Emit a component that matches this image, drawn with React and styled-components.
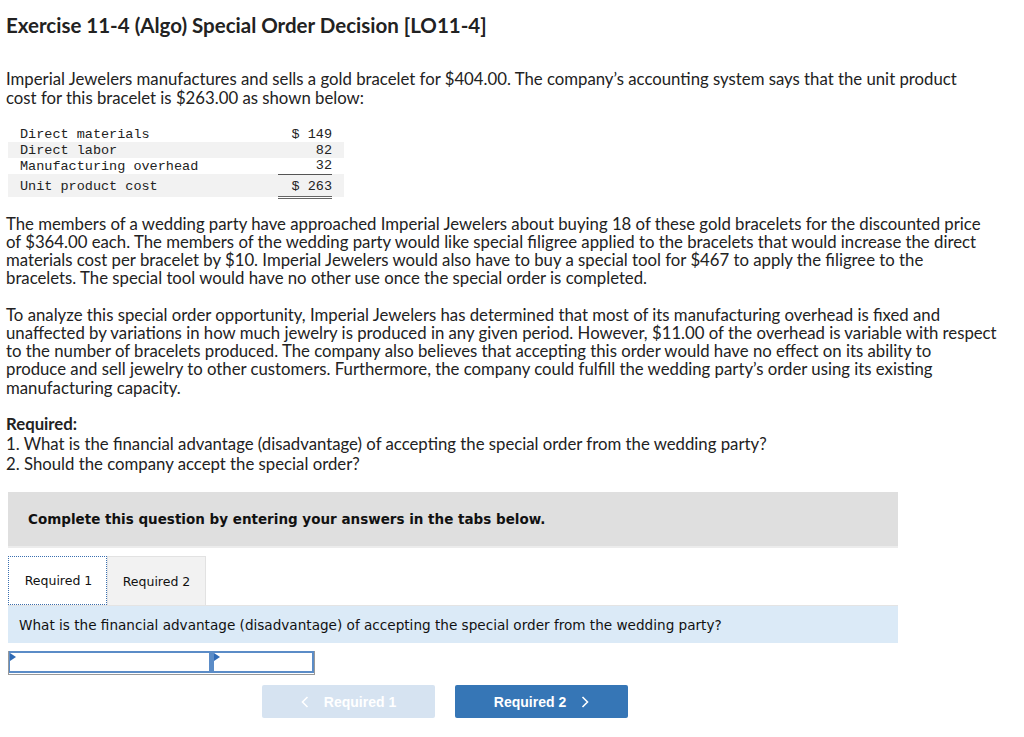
import React from 'react';
import styled, { createGlobalStyle } from 'styled-components';

const GlobalStyle = createGlobalStyle`
  body {
    margin: 0;
    background: #fff;
    font-family: Lato, "Open Sans", sans-serif;
    color: #222;
  }
`;

const Page = styled.div`
  width: 1024px;
  padding: 12px 0 0 6px;
  box-sizing: border-box;
`;

const Title = styled.h1`
  margin: 0 0 31px;
  font-size: 20.5px;
  font-weight: 700;
  color: #222;
  line-height: 26px;
`;

const Para = styled.p`
  margin: 0 0 ${({ $gap }) => $gap ?? 19}px;
  font-size: 16.75px;
  line-height: ${({ $lh }) => $lh || 18}px;
  max-width: ${({ $width }) => $width || 990}px;
`;

const CostTable = styled.table`
  border-collapse: collapse;
  margin: 7px 0 16px 2px;
  width: 336px;
  font-family: "Liberation Mono", monospace;
  font-size: 13.5px;
  color: #222;
`;

const Row = styled.tr`
  background: ${({ $shade }) => ($shade ? '#f2f2f2' : '#fff')};
`;

const Label = styled.td`
  padding: ${({ $total }) => ($total ? '4px 12px 2px' : '0 12px')};
  height: ${({ $total }) => ($total ? 21 : 16)}px;
  line-height: 15px;
  box-sizing: border-box;
`;

const Amount = styled.td`
  text-align: right;
  padding: ${({ $total }) => ($total ? '4px 0 2px' : '0')};
  line-height: 15px;
  box-sizing: border-box;
  width: 54px;
  border-top: ${({ $top }) => ($top ? '1px solid #555' : 'none')};
  border-bottom: ${({ $double }) => ($double ? '3px double #666' : 'none')};
`;

const Spacer = styled.td`
  width: 10px;
`;

const ReqTitle = styled.strong`
  font-weight: 700;
`;

const Panel = styled.div`
  width: 890px;
  margin-left: 2px;
`;

const Banner = styled.div`
  background: #dfdfdf;
  border-bottom: 2px solid #ececec;
  height: 54px;
  padding: 0 20px;
  display: flex;
  align-items: center;
  font-family: "DejaVu Sans", Verdana, sans-serif;
  font-weight: 700;
  font-size: 13.5px;
  color: #111;
`;

const Tabs = styled.div`
  display: flex;
  margin-top: 8px;
`;

const Tab = styled.div`
  width: 99px;
  height: 49px;
  box-sizing: border-box;
  display: flex;
  align-items: center;
  justify-content: center;
  padding-left: ${({ $active }) => ($active ? 2 : 0)}px;
  font-family: "DejaVu Sans", Verdana, sans-serif;
  font-size: 12.5px;
  color: #111;
  background: ${({ $active }) => ($active ? '#fff' : '#f2f2f2')};
  border: ${({ $active }) => ($active ? '1px dotted #3a6fb0' : '1px solid #e2e2e2')};
  border-bottom: ${({ $active }) => ($active ? '1px dotted #3a6fb0' : 'none')};
`;

const Question = styled.div`
  background: #dbeaf7;
  border-top: 1px solid #e4e4e4;
  height: 37px;
  padding: 0 11px;
  display: flex;
  align-items: center;
  font-family: "DejaVu Sans", Verdana, sans-serif;
  font-size: 13.6px;
  color: #111;
`;

const AnswerRow = styled.div`
  display: flex;
  margin-top: 8px;
  width: 307px;
  height: 24px;
  border-left: 1px solid #999;
  border-bottom: 1px solid #999;
  border-right: 1px solid #999;
  box-sizing: border-box;
`;

const Cell = styled.div`
  position: relative;
  width: ${({ $w }) => $w}px;
  height: 22px;
  border: 2px solid #5b8cc7;
  border-left-width: ${({ $thick }) => ($thick ? 3 : 1)}px;
  box-sizing: border-box;
  background: #fff;
`;

const Flag = styled.span`
  position: absolute;
  left: 0;
  top: 0;
  width: 0;
  height: 0;
  border-top: 4px solid transparent;
  border-bottom: 4px solid transparent;
  border-left: 6px solid #2f6ab5;
`;

const Nav = styled.div`
  display: flex;
  gap: 20px;
  margin: 10px 0 0 256px;
`;

const NavButton = styled.button`
  width: 173px;
  height: 33px;
  border: none;
  border-radius: 2px;
  background: ${({ $disabled }) => ($disabled ? '#d6e3f1' : '#3676b6')};
  color: #fff;
  font-family: "Liberation Sans", Arial, sans-serif;
  font-weight: 700;
  font-size: 14px;
  display: flex;
  align-items: center;
  justify-content: center;
  gap: 15px;
  padding: 0;
`;

const Chevron = styled.svg`
  width: 8px;
  height: 12px;
`;

const rows = [
  { label: 'Direct materials', amount: '$ 149' },
  { label: 'Direct labor', amount: '82', shade: true },
  { label: 'Manufacturing overhead', amount: '32' },
];

export default function App() {
  return (
    <Page>
      <GlobalStyle />
      <Title>Exercise 11-4 (Algo) Special Order Decision [LO11-4]</Title>
      <Para $lh={19} $width={975}>
        Imperial Jewelers manufactures and sells a gold bracelet for $404.00. The company’s accounting system says that the unit product cost for this bracelet is $263.00 as shown below:
      </Para>
      <CostTable>
        <tbody>
          {rows.map((r) => (
            <Row key={r.label} $shade={r.shade}>
              <Label>{r.label}</Label>
              <Amount>{r.amount}</Amount>
              <Spacer />
            </Row>
          ))}
          <Row $shade>
            <Label $total>Unit product cost</Label>
            <Amount $total $top $double>$ 263</Amount>
            <Spacer />
          </Row>
        </tbody>
      </CostTable>
      <Para $width={985}>
        The members of a wedding party have approached Imperial Jewelers about buying 18 of these gold bracelets for the discounted price of $364.00 each. The members of the wedding party would like special filigree applied to the bracelets that would increase the direct materials cost per bracelet by $10. Imperial Jewelers would also have to buy a special tool for $467 to apply the filigree to the bracelets. The special tool would have no other use once the special order is completed.
      </Para>
      <Para $width={1000} $lh={18.25} $gap={17}>
        To analyze this special order opportunity, Imperial Jewelers has determined that most of its manufacturing overhead is fixed and unaffected by variations in how much jewelry is produced in any given period. However, $11.00 of the overhead is variable with respect to the number of bracelets produced. The company also believes that accepting this order would have no effect on its ability to
        <br />
        produce and sell jewelry to other customers. Furthermore, the company could fulfill the wedding party’s order using its existing manufacturing capacity.
      </Para>
      <Para $lh={20.2} $gap={18}>
        <ReqTitle>Required:</ReqTitle>
        <br />
        1. What is the financial advantage (disadvantage) of accepting the special order from the wedding party?
        <br />
        2. Should the company accept the special order?
      </Para>
      <Panel>
        <Banner>Complete this question by entering your answers in the tabs below.</Banner>
        <Tabs>
          <Tab $active>Required 1</Tab>
          <Tab>Required 2</Tab>
        </Tabs>
        <Question>What is the financial advantage (disadvantage) of accepting the special order from the wedding party?</Question>
        <AnswerRow>
          <Cell $w={202}><Flag /></Cell>
          <Cell $w={103} $thick><Flag /></Cell>
        </AnswerRow>
      </Panel>
      <Nav>
        <NavButton $disabled>
          <Chevron viewBox="0 0 8 12"><path d="M6.5 1 L1.5 6 L6.5 11" fill="none" stroke="#fff" strokeWidth="1.6" /></Chevron>
          Required 1
        </NavButton>
        <NavButton>
          Required 2
          <Chevron viewBox="0 0 8 12"><path d="M1.5 1 L6.5 6 L1.5 11" fill="none" stroke="#fff" strokeWidth="1.6" /></Chevron>
        </NavButton>
      </Nav>
    </Page>
  );
}
